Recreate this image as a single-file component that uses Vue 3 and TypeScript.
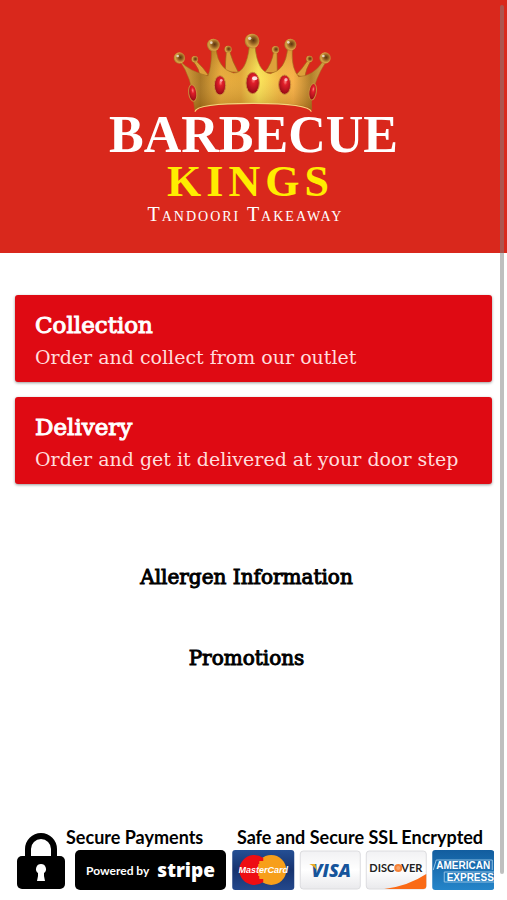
<script setup lang="ts">
interface OrderOption {
  title: string
  detail: string
}

interface Ball {
  x: number
  y: number
  r: number
}

const options: OrderOption[] = [
  { title: 'Collection', detail: 'Order and collect from our outlet' },
  { title: 'Delivery', detail: 'Order and get it delivered at your door step' },
]

const links: string[] = ['Allergen Information', 'Promotions']

const backBalls: Ball[] = [
  { x: 102, y: 103, r: 10 },
  { x: 202, y: 73, r: 11 },
  { x: 344, y: 74, r: 11 },
  { x: 446, y: 102, r: 10 },
]

const frontBalls: Ball[] = [
  { x: 56, y: 99, r: 17 },
  { x: 158, y: 60, r: 19 },
  { x: 274, y: 48, r: 22 },
  { x: 389, y: 59, r: 18 },
  { x: 493, y: 99, r: 17 },
]
</script>

<template>
  <div class="page">
    <header class="brand">
      <svg class="crown" viewBox="10 0 540 270" aria-hidden="true">
        <defs>
          <linearGradient id="gold" x1="0" x2="1" y1="0" y2="0">
            <stop offset="0" stop-color="#e0a43a" />
            <stop offset="0.14" stop-color="#a06a18" />
            <stop offset="0.28" stop-color="#e8a634" />
            <stop offset="0.42" stop-color="#dfa02f" />
            <stop offset="0.54" stop-color="#fbe654" />
            <stop offset="0.68" stop-color="#f2b53d" />
            <stop offset="0.78" stop-color="#f8ab40" />
            <stop offset="0.9" stop-color="#a8731e" />
            <stop offset="1" stop-color="#d9a544" />
          </linearGradient>
          <linearGradient id="shade" x1="0" x2="0" y1="0" y2="1">
            <stop offset="0" stop-color="#6b4208" stop-opacity="0.25" />
            <stop offset="0.5" stop-color="#fff0a0" stop-opacity="0.1" />
            <stop offset="1" stop-color="#7a4a08" stop-opacity="0.35" />
          </linearGradient>
          <radialGradient id="ball" cx="0.6" cy="0.45" r="0.65">
            <stop offset="0" stop-color="#5d3410" />
            <stop offset="0.3" stop-color="#8d5a1e" />
            <stop offset="0.7" stop-color="#d9a344" />
            <stop offset="1" stop-color="#9d6820" />
          </radialGradient>
          <radialGradient id="ruby" cx="0.55" cy="0.35" r="0.7">
            <stop offset="0" stop-color="#ff8580" />
            <stop offset="0.25" stop-color="#e01f2a" />
            <stop offset="1" stop-color="#8c0712" />
          </radialGradient>
        </defs>
        <g fill="#dda03a" stroke="#9d6519" stroke-width="2">
          <path d="M97 108 Q117 132 119 158 L143 150 Q128 128 107 108Z" />
          <path d="M197 80 Q194 110 194 140 L233 142 Q216 112 207 80Z" />
          <path d="M339 80 Q334 115 312 142 L350 144 Q349 110 349 80Z" />
          <path d="M440 108 Q424 132 406 150 L432 158 Q436 130 450 109Z" />
        </g>
        <circle v-for="ball in backBalls" :key="ball.x" :cx="ball.x" :cy="ball.y" :r="ball.r" fill="url(#ball)" />
        <path
          d="M58 108 Q86 139 142 153 Q154 120 152 74 L166 74 Q174 132 218 144 Q257 146 266 64 L283 64 Q291 143 329 146 Q374 137 381 73 L395 73 Q391 130 414 155 Q458 154 487 109 L494 113 Q465 158 452 216 L453 255 Q440 235 275 235 Q116 236 103 256 L99 230 Q94 160 58 108Z"
          fill="url(#gold)"
          stroke="#a56c1c"
          stroke-width="2"
        />
        <path
          d="M58 108 Q86 139 142 153 Q154 120 152 74 L166 74 Q174 132 218 144 Q257 146 266 64 L283 64 Q291 143 329 146 Q374 137 381 73 L395 73 Q391 130 414 155 Q458 154 487 109 L494 113 Q465 158 452 216 L453 255 Q440 235 275 235 Q116 236 103 256 L99 230 Q94 160 58 108Z"
          fill="url(#shade)"
        />
        <path d="M103 260 Q106 235 275 235 Q444 235 452 260" fill="none" stroke="#f5d47a" stroke-width="4" />
        <circle v-for="ball in frontBalls" :key="ball.x" :cx="ball.x" :cy="ball.y" :r="ball.r" fill="url(#ball)" />
        <g fill="#fff" opacity="0.7">
          <circle cx="51" cy="93" r="4" />
          <circle cx="152" cy="53" r="4" />
          <circle cx="267" cy="40" r="5" />
          <circle cx="383" cy="52" r="4" />
          <circle cx="488" cy="93" r="4" />
        </g>
        <g fill="url(#ruby)" stroke="#c98f3c" stroke-width="3">
          <ellipse cx="96" cy="204" rx="12" ry="25" transform="rotate(-8 96 204)" />
          <ellipse cx="178" cy="181" rx="17" ry="29" />
          <ellipse cx="276" cy="174" rx="20" ry="32" />
          <ellipse cx="372" cy="179" rx="18" ry="29" />
          <ellipse cx="456" cy="200" rx="11" ry="25" transform="rotate(8 456 200)" />
        </g>
        <g fill="#fff">
          <ellipse cx="282" cy="160" rx="8" ry="6" opacity="0.85" />
          <circle cx="182" cy="166" r="4" opacity="0.6" />
          <circle cx="376" cy="164" r="5" opacity="0.6" />
        </g>
      </svg>
      <h1 class="name">BARBECUE <span class="kings">KINGS</span></h1>
      <p class="tagline">Tandoori Takeaway</p>
    </header>

    <main class="content">
      <button v-for="option in options" :key="option.title" type="button" class="option">
        <span class="option-title">{{ option.title }}</span>
        <span class="option-detail">{{ option.detail }}</span>
      </button>
    </main>

    <nav class="links">
      <a v-for="link in links" :key="link" href="#">{{ link }}</a>
    </nav>

    <footer class="payments">
      <svg class="lock" viewBox="0 0 48 58" aria-hidden="true">
        <path d="M11 27V17a13 13 0 0 1 26 0v10" fill="none" stroke="#000" stroke-width="6" />
        <rect y="24" width="48" height="33" rx="5" />
        <path d="M24 32a5 5 0 0 1 3 9v3l1 5h-8l1-5v-3a5 5 0 0 1 3-9Z" fill="#fff" />
      </svg>
      <div class="secure">
        <strong class="caption">Secure Payments</strong>
        <div class="stripe"><span>Powered by</span><b>stripe</b></div>
      </div>
      <div class="encrypted">
        <strong class="caption">Safe and Secure SSL Encrypted</strong>
        <div class="cards">
          <svg viewBox="0 0 62 40" role="img" aria-label="MasterCard">
            <defs>
              <linearGradient id="navy" x1="0" x2="0" y1="0" y2="1">
                <stop offset="0" stop-color="#254f94" />
                <stop offset="0.5" stop-color="#16336f" />
                <stop offset="1" stop-color="#24488c" />
              </linearGradient>
            </defs>
            <rect width="62" height="40" rx="3" fill="url(#navy)" />
            <circle cx="39" cy="20" r="15" fill="#f79f1a" />
            <path d="M31 8A15 15 0 1 0 31 32V29H27V26H26V14H27V11H31Z" fill="#ee0d13" />
            <text x="31" y="23" class="mc">MasterCard</text>
          </svg>
          <svg viewBox="0 0 62 40" role="img" aria-label="Visa">
            <defs>
              <linearGradient id="paper" x1="0" x2="0" y1="0" y2="1">
                <stop offset="0" stop-color="#f1f1f3" />
                <stop offset="0.5" stop-color="#fff" />
                <stop offset="1" stop-color="#e9e9ec" />
              </linearGradient>
            </defs>
            <rect x="1" y="1" width="60" height="38" rx="3" fill="url(#paper)" stroke="#dcdcdf" />
            <text x="32" y="27" class="visa">VISA</text>
            <path d="M10 14h6l2 7q-3-5-8-7Z" fill="#e9ad24" />
          </svg>
          <svg viewBox="0 0 62 40" role="img" aria-label="Discover">
            <rect x="1" y="1" width="60" height="38" rx="3" fill="url(#paper)" stroke="#dcdcdf" />
            <path d="M19 39Q43 36 61 24v12a3 3 0 0 1-3 3Z" fill="#fa6a16" />
            <text x="29" y="22" class="discover discover-start">DISC</text>
            <circle cx="33" cy="18" r="4" fill="#f58238" />
            <circle cx="33" cy="18" r="2" fill="#f9a56c" />
            <text x="36" y="22" class="discover">VER</text>
          </svg>
          <svg viewBox="0 0 62 40" role="img" aria-label="American Express">
            <defs>
              <linearGradient id="amex" x1="0" x2="0" y1="0" y2="1">
                <stop offset="0" stop-color="#125d9f" />
                <stop offset="1" stop-color="#2585c9" />
              </linearGradient>
            </defs>
            <rect width="62" height="40" rx="3" fill="url(#amex)" />
            <path d="M1 20 4 10H60V20M12 32V22H62M12 32H62" fill="none" stroke="#8fc0e3" />
            <text x="31" y="19" class="amex">AMERICAN</text>
            <text x="38" y="31" class="amex">EXPRESS</text>
          </svg>
        </div>
      </div>
    </footer>

    <div class="scroll-thumb" aria-hidden="true"></div>
  </div>
</template>

<style>
body {
  margin: 0;
  background: #fff;
}
</style>

<style scoped>
.page {
  position: relative;
  display: flex;
  flex-direction: column;
  min-height: 100vh;
  box-sizing: border-box;
  color: #000;
  font-family: "DejaVu Serif", serif;
}

.brand {
  display: flex;
  flex-direction: column;
  align-items: center;
  padding: 25px 16px 29px;
  background: #d9281c;
  color: #fff;
  font-family: "Liberation Serif", serif;
  text-align: center;
}

.crown {
  width: 180px;
  height: 90px;
}

.name {
  margin: 0;
  font-size: 52px;
  line-height: 40px;
}

.kings {
  display: block;
  margin-top: 5px;
  padding-right: 6px;
  color: #ffed00;
  font-size: 44px;
  line-height: 44px;
  letter-spacing: 5px;
}

.tagline {
  margin: 0;
  padding-right: 16px;
  font-size: 20px;
  line-height: 20px;
  font-variant: small-caps;
  letter-spacing: 2px;
}

.content {
  display: flex;
  flex-direction: column;
  gap: 15px;
  padding: 42px 15px 0;
}

.option {
  display: flex;
  flex-direction: column;
  gap: 4px;
  padding: 16px 20px 11px;
  border: 0;
  border-radius: 3px;
  background: #df0a13;
  box-shadow: 0 1px 3px rgba(0, 0, 0, 0.4);
  color: #fff;
  font-family: inherit;
  text-align: left;
  cursor: pointer;
}

.option-title {
  font-size: 23px;
  line-height: 28px;
  -webkit-text-stroke: 1px currentColor;
}

.option-detail {
  color: #ffdcdc;
  font-size: 19px;
  line-height: 28px;
}

.links {
  display: flex;
  flex-direction: column;
  align-items: center;
  gap: 53px;
  padding: 79px 14px 40px 0;
}

.links a {
  color: inherit;
  font-size: 20px;
  line-height: 28px;
  text-decoration: none;
  -webkit-text-stroke: 1px currentColor;
}

.payments {
  display: flex;
  align-items: flex-end;
  margin-top: auto;
  padding: 0 13px 10px 17px;
  font-family: Lato, sans-serif;
}

.lock {
  flex: none;
  width: 48px;
  height: 58px;
  margin-right: 1px;
}

.secure {
  flex: none;
  width: 160px;
  margin-right: 6px;
}

.encrypted {
  flex: 1;
  min-width: 0;
}

.caption {
  display: block;
  font-size: 18px;
  line-height: 26px;
  white-space: nowrap;
}

.encrypted .caption {
  padding-right: 6px;
  text-align: center;
}

.stripe {
  display: flex;
  align-items: center;
  justify-content: center;
  gap: 8px;
  height: 40px;
  margin-left: 9px;
  border-radius: 5px;
  background: #000;
  color: #fff;
  font-size: 12px;
  font-weight: 700;
}

.stripe b {
  font-family: "Open Sans", sans-serif;
  font-size: 19px;
  font-weight: 800;
  line-height: 28px;
}

.cards {
  display: grid;
  grid-template-columns: repeat(4, 1fr);
  gap: 4px;
}

.cards svg {
  display: block;
  width: 100%;
  height: 40px;
}

.mc {
  fill: #fff;
  font: italic 700 9px "Liberation Sans", sans-serif;
  text-anchor: middle;
}

.visa {
  fill: #16549b;
  font: italic 800 18px "Open Sans", sans-serif;
  text-anchor: middle;
}

.discover {
  fill: #222;
  font: 700 11px Lato, sans-serif;
}

.discover-start {
  text-anchor: end;
}

.amex {
  fill: #fff;
  font: 700 10px "Liberation Sans", sans-serif;
  text-anchor: middle;
}

.scroll-thumb {
  position: absolute;
  top: 5px;
  right: 3px;
  bottom: 26px;
  width: 4px;
  border-radius: 2px;
  background: rgba(128, 128, 128, 0.5);
}
</style>
